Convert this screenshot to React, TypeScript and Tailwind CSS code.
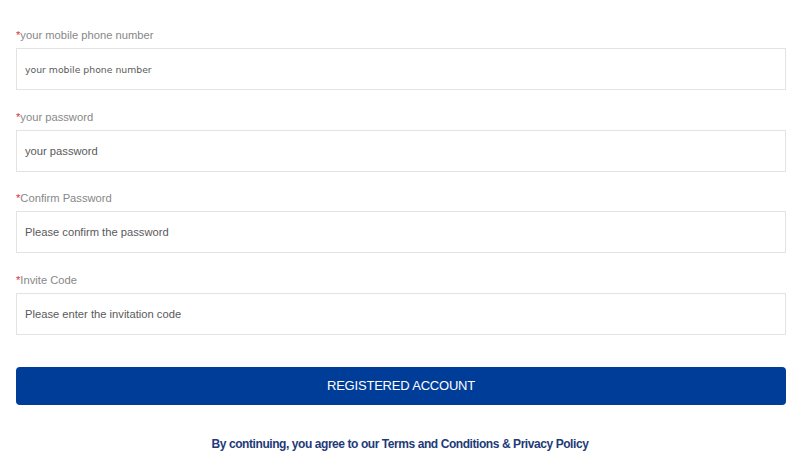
import React from 'react'

const fields = [
  { label: 'your mobile phone number', placeholder: 'your mobile phone number', small: true },
  { label: 'your password', placeholder: 'your password' },
  { label: 'Confirm Password', placeholder: 'Please confirm the password' },
  { label: 'Invite Code', placeholder: 'Please enter the invitation code' },
]

export default function App() {
  return (
    <div className="w-[800px] h-[468px] bg-white px-4 pt-[28px] font-['Liberation_Sans',Arial,sans-serif]">
      <div className="flex flex-col gap-[19.5px]">
        {fields.map((f) => (
          <div key={f.label} className="flex flex-col">
            <label className="h-[14px] leading-[14px] text-[11.2px] text-[#888888] mb-[6px]">
              <span className="text-[#d9363e]">*</span>
              {f.label}
            </label>
            <input
              className={
                f.small
                  ? "h-[42px] w-[770px] border border-[#e3e3e3] bg-white px-[8px] outline-none text-[9.3px] font-['DejaVu_Sans',Verdana,sans-serif] placeholder:text-[#5a5a5a]"
                  : 'h-[42px] w-[770px] border border-[#e3e3e3] bg-white px-[8px] outline-none text-[11.2px] placeholder:text-[#5a5a5a]'
              }
              placeholder={f.placeholder}
            />
          </div>
        ))}
      </div>
      <button className="mt-[32.5px] h-[38px] w-[770px] rounded-[4px] bg-[#003d99] text-white text-[13px] tracking-[-0.2px]">
        REGISTERED ACCOUNT
      </button>
      <p className="mt-[32px] text-center text-[12px] leading-[14px] font-bold text-[#1e3a78] tracking-[-0.43px]">
        By continuing, you agree to our Terms and Conditions &amp; Privacy Policy
      </p>
    </div>
  )
}
